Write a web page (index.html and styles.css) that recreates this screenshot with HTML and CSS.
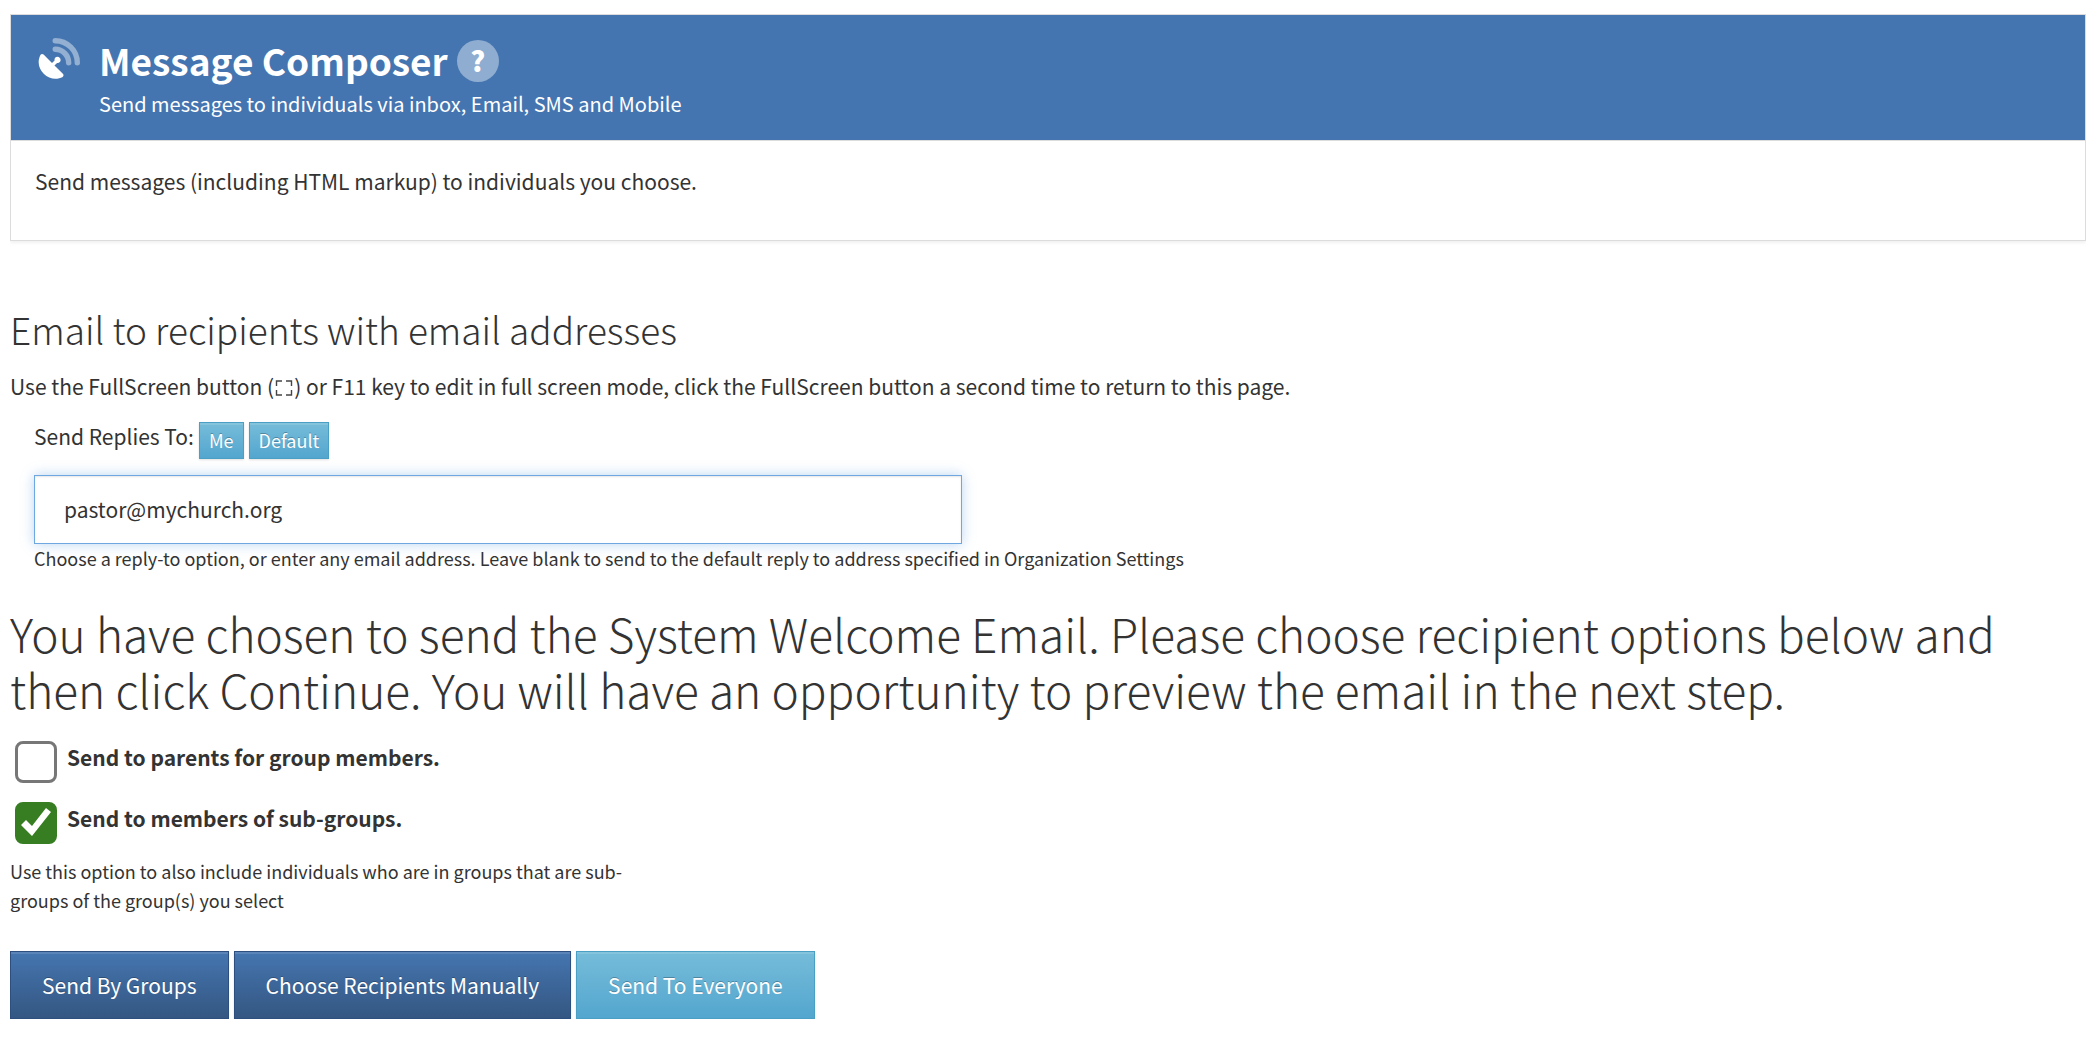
FILE: index.html
```
<!DOCTYPE html>
<html lang="en">
<head>
<meta charset="utf-8">
<meta name="viewport" content="width=device-width, initial-scale=1">
<title>Message Composer</title>
<link rel="stylesheet" href="styles.css">
</head>
<body>
<section class="panel">
  <header class="panel-header">
    <svg class="dish-icon" viewBox="2 1 39 39" aria-hidden="true">
      <g class="dish-waves">
        <path d="M18 3.5A20.5 20.5 0 0 1 38.5 24"/>
        <path d="M18 11.5A12.5 12.5 0 0 1 30.5 24"/>
      </g>
      <path class="dish-bowl" d="M4.4 16.6C5 15.6 6.300 15.500 7.200 16.400L15 24.200L17.400 21.800C17 19.900 18.300 18.500 20 18.500C21.700 18.500 23 19.800 23 21.500C23 23.200 21.500 24.500 19.700 24.100L17.300 26.500L25.100 34.300C26 35.200 25.900 36.500 24.900 37.100C19.900 39.900 12.500 39.500 7.300 34.200C2.200 29.100 1.300 22.300 4.400 16.600Z"/>
    </svg>
    <div>
      <div class="title-row">
        <h1 class="panel-title">Message Composer</h1>
        <a class="help-link" href="#help" aria-label="Help">?</a>
      </div>
      <p class="subtitle">Send messages to individuals via inbox, Email, SMS and Mobile</p>
    </div>
  </header>
  <p class="panel-body">Send messages (including HTML markup) to individuals you choose.</p>
</section>

<form class="composer">
  <h3 class="section-title">Email to recipients with email addresses</h3>
  <p class="intro">Use the FullScreen button (<svg class="fullscreen-icon" viewBox="0 0 20 16" aria-hidden="true"><path d="M2.500 6V1H8M12 1H17.500V6M17.500 10V15H12M8 15H2.500V10"/></svg>) or F11 key to edit in full screen mode, click the FullScreen button a second time to return to this page.</p>

  <div class="reply">
    <div class="reply-row">
      <label for="reply-to">Send Replies To:</label>
      <button type="button" class="btn btn-info btn-small">Me</button>
      <button type="button" class="btn btn-info btn-small">Default</button>
    </div>
    <input class="reply-input" id="reply-to" type="text" value="pastor@mychurch.org">
    <p class="reply-help">Choose a reply-to option, or enter any email address. Leave blank to send to the default reply to address specified in Organization Settings</p>
  </div>

  <h2 class="notice">You have chosen to send the System Welcome Email. Please choose recipient options below and then click Continue. You will have an opportunity to preview the email in the next step.</h2>

  <div class="option">
    <input class="checkbox" type="checkbox" id="parents">
    <label for="parents">Send to parents for group members.</label>
  </div>
  <div class="option">
    <input class="checkbox" type="checkbox" id="subgroups" checked>
    <label for="subgroups">Send to members of sub-groups.</label>
  </div>
  <p class="option-help">Use this option to also include individuals who are in groups that are sub-<wbr>groups of the group(s) you select</p>

  <div class="actions">
    <button type="button" class="btn btn-primary">Send By Groups</button>
    <button type="button" class="btn btn-primary">Choose Recipients Manually</button>
    <button type="button" class="btn btn-info">Send To Everyone</button>
  </div>
</form>
</body>
</html>
```
FILE: styles.css
```
* {
  box-sizing: border-box;
}

body {
  margin: 14px 12px 24px 10px;
  background: #fff;
  color: #333;
  font-family: "Noto Sans CJK SC", "Open Sans", sans-serif;
  font-size: 21px;
  line-height: 32px;
}

h1, h2, h3, p {
  margin: 0;
}

.panel {
  border: 1px solid #dcdcdc;
  box-shadow: 0 2px 3px rgba(0, 0, 0, 0.06);
}

.panel-header {
  display: flex;
  gap: 19px;
  padding: 20px 27px;
  border-bottom: 1px solid #dcdcdc;
  background: #4575b0;
  color: #fff;
}

.dish-icon {
  flex: none;
  width: 42px;
  height: 42px;
  margin-top: 3px;
}

.dish-waves {
  fill: none;
  stroke: #93afd1;
  stroke-width: 5;
  stroke-linecap: round;
}

.dish-bowl {
  fill: #fff;
}

.title-row {
  display: flex;
  align-items: center;
  gap: 9px;
}

.panel-title {
  font-size: 37px;
  line-height: 51px;
  font-weight: 700;
}

.help-link {
  width: 42px;
  height: 42px;
  border-radius: 50%;
  background: #8fadd0;
  color: #fff;
  font-size: 28px;
  line-height: 40px;
  font-weight: 900;
  text-align: center;
  text-decoration: none;
}

.subtitle {
  margin-top: 2px;
  font-size: 20px;
}

.panel-body {
  padding: 24px 24px 43px;
}

.composer {
  padding-top: 64px;
}

.section-title {
  font-size: 37px;
  line-height: 48px;
  font-weight: 200;
}

.intro {
  margin-top: 17px;
}

.fullscreen-icon {
  width: 20px;
  height: 16px;
  fill: none;
  stroke: #444;
  stroke-width: 1.4;
  vertical-align: -1px;
}

.reply {
  padding: 18px 24px 0;
}

.reply-row {
  display: flex;
  align-items: flex-end;
  gap: 5px;
}

.reply-row label {
  align-self: flex-start;
}

.btn {
  padding: 0 31px;
  border: 1px solid;
  color: #fff;
  font-family: inherit;
  font-size: 21px;
  line-height: 66px;
  text-shadow: 0 -1px 0 rgba(0, 0, 0, 0.25);
  box-shadow: inset 0 2px 0 rgba(255, 255, 255, 0.12), 0 1px 2px rgba(0, 0, 0, 0.12);
}

.btn-small {
  margin-top: 2px;
  padding: 0 9px;
  font-size: 18px;
  line-height: 35px;
}

.btn-primary {
  border-color: #2c4f7f;
  background: linear-gradient(#4575b0, #345782);
}

.btn-info {
  border-color: #4a9fc5;
  background: linear-gradient(#76bcd9, #53a6cf);
}

.reply-input {
  display: block;
  width: 100%;
  max-width: 928px;
  height: 69px;
  margin-top: 16px;
  padding: 0 29px 2px;
  border: 1px solid #6fa8e0;
  outline: 0;
  color: #333;
  font-family: inherit;
  font-size: 21px;
  box-shadow: inset 0 1px 2px rgba(0, 0, 0, 0.1), 0 0 12px rgba(82, 150, 220, 0.4);
}

.reply-help {
  font-size: 18px;
  line-height: 28px;
}

.notice {
  margin-top: 33px;
  font-size: 46px;
  line-height: 56px;
  font-weight: 200;
}

.option {
  display: flex;
  gap: 10px;
  height: 61px;
  padding-left: 5px;
  font-weight: 700;
}

.notice + .option {
  margin-top: 24px;
}

.checkbox {
  flex: none;
  appearance: none;
  width: 42px;
  height: 42px;
  margin: 0;
  border: 3px solid #777;
  border-radius: 8px;
  background: #fff;
}

.checkbox:checked {
  border-color: #377d22;
  background: #377d22;
}

.checkbox:checked::before {
  content: "";
  display: block;
  width: 36px;
  height: 36px;
  background: #fff;
  clip-path: polygon(3px 20px, 8px 15px, 14px 21px, 28px 3px, 33px 7px, 14px 31px);
}

.option-help {
  max-width: 640px;
  margin-top: -6px;
  font-size: 18px;
  line-height: 29px;
}

.actions {
  display: flex;
  flex-wrap: wrap;
  gap: 5px;
  margin-top: 36px;
}
```
